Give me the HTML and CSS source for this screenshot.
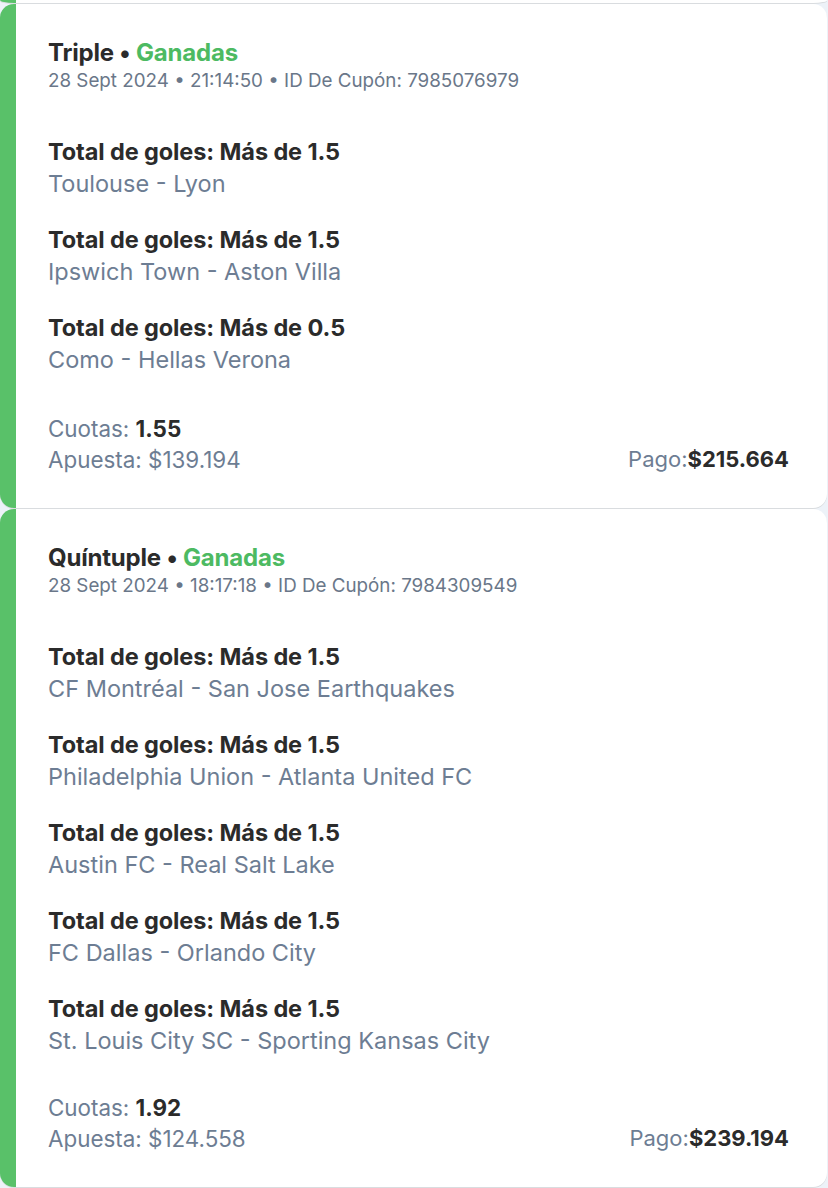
FILE: index.html
```html
<!DOCTYPE html>
<html lang="es">
<head>
<meta charset="utf-8">
<title>Cupones</title>
<link rel="stylesheet" href="styles.css">
</head>
<body>
<div class="list">
  <div class="card card-tail"></div>

  <div class="card">
    <div class="head">
      <div class="title">Triple <span class="dot">•</span> <span class="won">Ganadas</span></div>
      <div class="meta">28 Sept 2024 • 21:14:50 • ID De Cupón: 7985076979</div>
    </div>
    <div class="sels">
      <div class="sel"><div class="market">Total de goles: Más de 1.5</div><div class="match">Toulouse - Lyon</div></div>
      <div class="sel"><div class="market">Total de goles: Más de 1.5</div><div class="match">Ipswich Town - Aston Villa</div></div>
      <div class="sel"><div class="market">Total de goles: Más de 0.5</div><div class="match">Como - Hellas Verona</div></div>
    </div>
    <div class="foot">
      <div class="foot-left">
        <div>Cuotas: <b>1.55</b></div>
        <div>Apuesta: $139.194</div>
      </div>
      <div class="pay">Pago:<b>$215.664</b></div>
    </div>
  </div>

  <div class="card">
    <div class="head">
      <div class="title">Quíntuple <span class="dot">•</span> <span class="won">Ganadas</span></div>
      <div class="meta">28 Sept 2024 • 18:17:18 • ID De Cupón: 7984309549</div>
    </div>
    <div class="sels">
      <div class="sel"><div class="market">Total de goles: Más de 1.5</div><div class="match">CF Montréal - San Jose Earthquakes</div></div>
      <div class="sel"><div class="market">Total de goles: Más de 1.5</div><div class="match">Philadelphia Union - Atlanta United FC</div></div>
      <div class="sel"><div class="market">Total de goles: Más de 1.5</div><div class="match">Austin FC - Real Salt Lake</div></div>
      <div class="sel"><div class="market">Total de goles: Más de 1.5</div><div class="match">FC Dallas - Orlando City</div></div>
      <div class="sel"><div class="market">Total de goles: Más de 1.5</div><div class="match">St. Louis City SC - Sporting Kansas City</div></div>
    </div>
    <div class="foot foot-tight">
      <div class="foot-left">
        <div>Cuotas: <b>1.92</b></div>
        <div>Apuesta: $124.558</div>
      </div>
      <div class="pay">Pago:<b>$239.194</b></div>
    </div>
  </div>
</div>
</body>
</html>
```

FILE: styles.css
```css
html, body {
  margin: 0;
  padding: 0;
}
body {
  background: #edf2f8;
  font-family: Inter, "Noto Sans", sans-serif;
  color: #2b2b2b;
  width: 828px;
  height: 1188px;
  overflow: hidden;
}
.list {
  display: flex;
  flex-direction: column;
  gap: 1px;
  padding-right: 1px;
}
.card {
  background: #fff;
  border-left: 16px solid #59c169;
  border-radius: 14px;
  box-shadow: 0 1px 0 #d9dcdf;
  padding: 34px 38px 33px 32px;
}
.card-tail {
  height: 3px;
  padding: 0;
  border-radius: 0 0 14px 14px / 0 0 3px 3px;
}
.head {
  display: flex;
  flex-direction: column;
}
.title {
  font-size: 24px;
  font-weight: 700;
  line-height: 30px;
  letter-spacing: -0.2px;
}
.won {
  color: #4dba62;
}
.meta {
  font-size: 18.8px;
  line-height: 26px;
  color: #6a7789;
  margin-top: 0;
}
.sels {
  display: flex;
  flex-direction: column;
  gap: 24px;
  margin-top: 42px;
}
.sel {
  display: flex;
  flex-direction: column;
}
.market {
  font-size: 23.5px;
  font-weight: 700;
  line-height: 32px;
  letter-spacing: -0.1px;
}
.match {
  font-size: 23.5px;
  line-height: 32px;
  color: #6d7d93;
}
.foot {
  display: flex;
  justify-content: space-between;
  align-items: flex-end;
  margin-top: 37px;
  font-size: 22.4px;
  line-height: 31px;
  color: #6d7d93;
}
.foot-tight {
  margin-top: 35px;
}
.pay {
  font-size: 22px;
}
.foot b {
  color: #2b2b2b;
  font-weight: 700;
}
```
